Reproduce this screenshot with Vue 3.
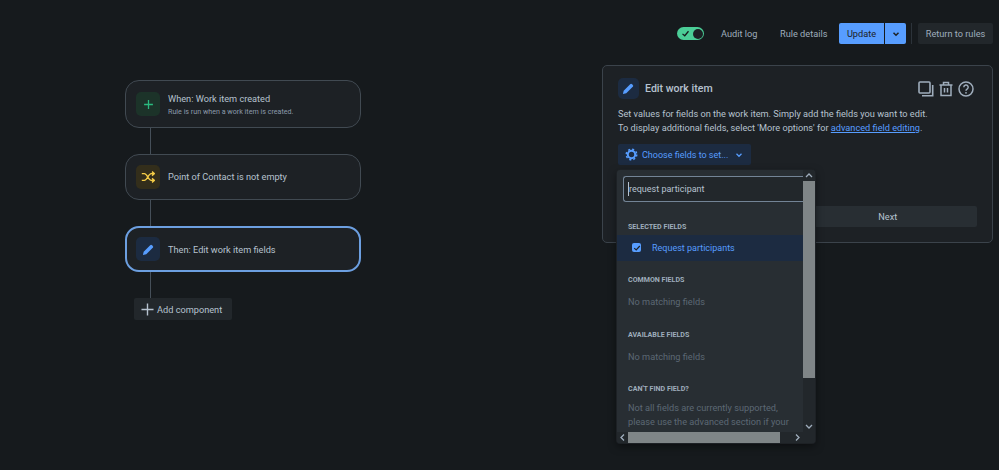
<template>
  <div class="page">
    <header class="topbar">
      <span class="toggle">
        <svg class="toggle-check" viewBox="0 0 12 12" width="9" height="9"><path d="M2 6.500 5 9l5-6" fill="none" stroke="#161a1d" stroke-width="1.700"/></svg>
        <span class="toggle-knob"></span>
      </span>
      <a class="top-link first">Audit log</a>
      <a class="top-link">Rule details</a>
      <button class="update">Update</button>
      <button class="update-more">
        <svg viewBox="0 0 12 12" width="10" height="10"><path d="M3 4.500 6 7.500l3-3" fill="none" stroke="#1d2125" stroke-width="1.800"/></svg>
      </button>
      <span class="top-divider"></span>
      <button class="return">Return to rules</button>
    </header>

    <div class="content">
      <section class="flow">
        <template v-for="step in steps" :key="step.title">
          <div class="step" :class="[step.kind, { active: step.active }]">
            <span class="step-icon" :class="step.kind">
              <svg v-if="step.kind === 'trigger'" viewBox="0 0 12 12" width="11" height="11"><path d="M6 1.200v9.600M1.200 6h9.600" stroke="#2abb7f" stroke-width="1.400" fill="none"/></svg>
              <svg v-else-if="step.kind === 'cond'" viewBox="0 0 14 12" width="14" height="12"><path d="M.8 2.600h2.600c2.800 0 4 6.800 6.800 6.800h2.200M.8 9.400h2.600c2.800 0 4-6.800 6.800-6.800h2.200M11 .6l2.400 2-2.400 2M11 7.400l2.400 2-2.400 2" stroke="#f5cd47" stroke-width="1.400" fill="none"/></svg>
              <svg v-else viewBox="0 0 14 14" width="13" height="13"><path d="M1 13l.8-3.600 7-7a1.500 1.500 0 0 1 2.100 0l.7.700a1.500 1.500 0 0 1 0 2.100l-7 7z" fill="#579dff"/></svg>
            </span>
            <div class="step-text">
              <div class="step-title">{{ step.title }}</div>
              <div v-if="step.sub" class="step-sub">{{ step.sub }}</div>
            </div>
          </div>
          <div class="connector"></div>
        </template>
        <button class="add">
          <svg viewBox="0 0 14 14" width="13" height="13"><path d="M7 .5v13M.5 7h13" stroke="#b6c2cf" stroke-width="1.500" fill="none"/></svg>
          <span>Add component</span>
        </button>
      </section>

      <section class="panel">
        <div class="panel-head">
          <span class="step-icon small action">
            <svg viewBox="0 0 14 14" width="13" height="13"><path d="M1 13l.8-3.600 7-7a1.500 1.500 0 0 1 2.100 0l.7.700a1.500 1.500 0 0 1 0 2.100l-7 7z" fill="#579dff"/></svg>
          </span>
          <h2>Edit work item</h2>
          <div class="panel-tools">
            <svg viewBox="0 0 16 16" width="16" height="16"><rect x="1" y="1" width="11" height="11" rx="1" fill="none" stroke="#9fadbc" stroke-width="1.600"/><path d="M14.700 4v10.700H4" fill="none" stroke="#9fadbc" stroke-width="1.600"/></svg>
            <svg viewBox="0 0 16 16" width="16" height="16"><path d="M1.500 4h13M5.500 4V1.500h5V4M3 4v10.500h10V4M6.500 7v4.500M9.500 7v4.500" fill="none" stroke="#9fadbc" stroke-width="1.500"/></svg>
            <svg viewBox="0 0 16 16" width="16" height="16"><circle cx="8" cy="8" r="7" fill="none" stroke="#9fadbc" stroke-width="1.500"/><path d="M5.800 6.200a2.200 2.200 0 1 1 3.300 1.900c-.8.500-1.100.9-1.100 1.700" fill="none" stroke="#9fadbc" stroke-width="1.500"/><circle cx="8" cy="11.800" r=".9" fill="#9fadbc"/></svg>
          </div>
        </div>
        <p class="panel-desc">
          Set values for fields on the work item. Simply add the fields you want to edit.<br>
          To display additional fields, select 'More options' for <a>advanced field editing</a>.
        </p>
        <button class="choose">
          <svg viewBox="0 0 14 14" width="13" height="13"><circle cx="7" cy="7" r="4" fill="none" stroke="#579dff" stroke-width="2.200"/><circle cx="7" cy="7" r="5.700" fill="none" stroke="#579dff" stroke-width="1.500" stroke-dasharray="2.240 2.240"/></svg>
          <span>Choose fields to set...</span>
          <svg class="choose-chev" viewBox="0 0 12 12" width="10" height="10"><path d="M3 4.500 6 7.500l3-3" fill="none" stroke="#579dff" stroke-width="1.500"/></svg>
        </button>
        <div class="panel-actions">
          <button class="plain">Back</button>
          <button class="plain">Next</button>
        </div>

        <div class="dropdown">
          <div class="dd-body">
            <div class="dd-input"><span class="caret"></span>request participant</div>
            <div class="dd-label first">SELECTED FIELDS</div>
            <div class="dd-selected">
              <span class="check">
                <svg viewBox="0 0 10 10" width="8" height="8"><path d="M1.500 5.200 4 7.500l4.500-5" fill="none" stroke="#1d2125" stroke-width="1.500"/></svg>
              </span>
              Request participants
            </div>
            <div class="dd-label after-row">COMMON FIELDS</div>
            <div class="dd-empty">No matching fields</div>
            <div class="dd-label">AVAILABLE FIELDS</div>
            <div class="dd-empty">No matching fields</div>
            <div class="dd-label">CAN'T FIND FIELD?</div>
            <div class="dd-empty note">Not all fields are currently supported, please use the advanced section if your field does not appear in the list.</div>
          </div>
          <div class="vbar">
            <svg viewBox="0 0 12 11" width="12" height="11"><path d="M3 7l3-3 3 3" fill="none" stroke="#9fadbc" stroke-width="1.300"/></svg>
            <div class="vtrack"><span class="vthumb"></span></div>
            <svg viewBox="0 0 12 11" width="12" height="11"><path d="M3 4l3 3 3-3" fill="none" stroke="#9fadbc" stroke-width="1.300"/></svg>
          </div>
          <div class="hbar">
            <svg viewBox="0 0 11 11" width="11" height="11"><path d="M7 2.500 4 5.500l3 3" fill="none" stroke="#9fadbc" stroke-width="1.300"/></svg>
            <div class="htrack"><span class="hthumb"></span></div>
            <svg viewBox="0 0 11 11" width="11" height="11"><path d="M4 2.500l3 3-3 3" fill="none" stroke="#9fadbc" stroke-width="1.300"/></svg>
          </div>
          <div class="corner"></div>
        </div>
      </section>
    </div>
  </div>
</template>

<script setup>
const steps = [
  { kind: 'trigger', title: 'When: Work item created', sub: 'Rule is run when a work item is created.' },
  { kind: 'cond', title: 'Point of Contact is not empty' },
  { kind: 'action', title: 'Then: Edit work item fields', active: true }
]
</script>

<style>
html, body {
  margin: 0;
  background: #161a1d;
}
</style>

<style scoped>
.page {
  width: 999px;
  height: 470px;
  overflow: hidden;
  background: #161a1d;
  color: #b6c2cf;
  font-family: Roboto, "Liberation Sans", sans-serif;
  font-size: 9.200px;
  box-sizing: border-box;
}

button {
  font-family: inherit;
  border: 0;
  cursor: pointer;
  white-space: nowrap;
}

/* Top bar */
.topbar {
  display: flex;
  align-items: center;
  justify-content: flex-end;
  height: 21px;
  padding: 23px 6px 0 0;
}

.toggle {
  position: relative;
  width: 27px;
  height: 13px;
  border-radius: 7px;
  background: #4bce97;
  display: flex;
  align-items: center;
}

.toggle-check {
  margin-left: 4px;
}

.toggle-knob {
  position: absolute;
  right: 1.500px;
  top: 1.500px;
  width: 10px;
  height: 10px;
  border-radius: 50%;
  background: #1d2125;
}

.top-link {
  color: #9fadbc;
  width: 59px;
}

.top-link.first {
  margin-left: 17px;
}

.update {
  width: 45px;
  height: 21px;
  background: #579dff;
  color: #1d2125;
  font-size: 9.200px;
  padding: 0;
  border-radius: 2px 0 0 2px;
}

.update-more {
  width: 21px;
  height: 21px;
  margin-left: 1px;
  padding: 0;
  background: #579dff;
  border-radius: 0 2px 2px 0;
  display: flex;
  align-items: center;
  justify-content: center;
}

.top-divider {
  width: 1px;
  height: 21px;
  margin: 0 6px 0 5px;
  background: #2c333a;
}

.return {
  width: 75px;
  height: 21px;
  padding: 0;
  background: #22272b;
  color: #9fadbc;
  font-size: 9.200px;
  border-radius: 2px;
}

.content {
  display: flex;
  margin-top: 21px;
}

/* Flow */
.flow {
  width: 236px;
  margin-left: 125px;
  padding-top: 15px;
}

.step {
  box-sizing: border-box;
  height: 46px;
  border: 1px solid #414a52;
  border-radius: 14px;
  background: #1d2125;
  display: flex;
  align-items: center;
  padding-left: 10px;
}

.step.trigger {
  height: 48px;
}

.step.active {
  border: 2px solid #6c9fe0;
  padding-left: 9px;
}

.step-icon {
  width: 24px;
  height: 24px;
  border-radius: 5px;
  display: flex;
  align-items: center;
  justify-content: center;
  flex: none;
}

.step-icon.trigger {
  background: #1c3329;
}

.step-icon.cond {
  background: #332e1b;
}

.step-icon.action {
  background: #1c2b41;
}

.step-icon.small {
  width: 21px;
  height: 21px;
}

.step-text {
  margin-left: 8px;
}

.step.trigger .step-text {
  padding-top: 1px;
}

.step.active .step-text {
  padding-top: 1px;
}

.step-title {
  font-size: 9.200px;
  line-height: 14px;
  color: #b6c2cf;
}

.step-sub {
  font-size: 7.150px;
  line-height: 11px;
  color: #8c9bab;
}

.connector {
  width: 1.500px;
  height: 26px;
  margin-left: 24.500px;
  background: #454f59;
}

.add {
  display: flex;
  align-items: center;
  gap: 3px;
  width: 98px;
  height: 22px;
  margin-left: 9px;
  padding: 0 0 0 7px;
  background: #22272b;
  color: #b6c2cf;
  font-size: 9.200px;
  border-radius: 2px;
}

/* Panel */
.panel {
  position: relative;
  box-sizing: border-box;
  width: 391px;
  height: 178px;
  margin-left: 241px;
  padding: 12px 15px 0;
  background: #1d2125;
  border: 1px solid #3b434b;
  border-radius: 5px;
}

.panel-head {
  display: flex;
  align-items: center;
  height: 21px;
}

.panel-head h2 {
  margin: 0 0 0 6px;
  font-size: 10.600px;
  font-weight: 500;
  color: #b6c2cf;
}

.panel-tools {
  display: flex;
  gap: 4px;
  margin-left: auto;
  margin-right: 3px;
}

.panel-desc {
  margin: 8px 0 0;
  font-size: 9.200px;
  line-height: 14px;
  color: #b6c2cf;
}

.panel-desc a {
  color: #579dff;
  text-decoration: underline;
}

.choose {
  display: flex;
  align-items: center;
  width: 133px;
  height: 21px;
  margin-top: 9px;
  padding: 0 0 0 7px;
  background: #1c2b41;
  color: #579dff;
  font-size: 9px;
  border-radius: 2px;
}

.choose span {
  margin-left: 4px;
}

.choose-chev {
  margin-left: 6px;
}

.panel-actions {
  display: flex;
  gap: 2px;
  margin-top: 41px;
}

.plain {
  flex: 1;
  height: 21px;
  padding: 0;
  background: #282e33;
  color: #b6c2cf;
  font-size: 9.200px;
  border-radius: 2px;
}

/* Dropdown */
.dropdown {
  position: absolute;
  left: 14px;
  top: 104px;
  width: 198px;
  height: 273px;
  display: grid;
  grid-template-columns: 186px 12px;
  grid-template-rows: 262px 11px;
  background: #282e33;
  border-radius: 3px;
  box-shadow: 0 0 0 1px #1d2125, 0 3px 8px rgba(0, 0, 0, 0.5);
  overflow: hidden;
}

.dd-body {
  overflow: hidden;
  padding-top: 6px;
  box-sizing: border-box;
}

.dd-input {
  box-sizing: border-box;
  position: relative;
  width: 186px;
  height: 26px;
  margin-left: 6px;
  padding-left: 5px;
  line-height: 24px;
  font-size: 9px;
  color: #b6c2cf;
  background: #22272b;
  border: 1px solid #738496;
  border-right: 0;
  border-radius: 3px 0 0 3px;
}

.caret {
  position: absolute;
  left: 4px;
  top: 5px;
  width: 1px;
  height: 14px;
  background: #b6c2cf;
}

.dd-label {
  margin: 19.500px 0 0 11px;
  font-size: 7.100px;
  line-height: 11px;
  font-weight: 700;
  color: #9fadbc;
}

.dd-label.first {
  margin-top: 18.500px;
}

.dd-label.after-row {
  margin-top: 13.500px;
}

.dd-selected {
  display: flex;
  align-items: center;
  height: 26px;
  margin-top: 3px;
  padding-left: 15px;
  background: #1c2b41;
  color: #579dff;
  font-size: 9px;
}

.check {
  width: 9px;
  height: 9px;
  margin-right: 11px;
  border-radius: 2px;
  background: #579dff;
  display: flex;
  align-items: center;
  justify-content: center;
}

.dd-empty {
  margin: 10px 0 0 11px;
  font-size: 9.200px;
  line-height: 14px;
  color: #5c6874;
}

.dd-empty.note {
  width: 165px;
  margin-top: 6.500px;
}

.vbar {
  background: #22272b;
  display: flex;
  flex-direction: column;
}

.vtrack {
  flex: 1;
}

.vthumb {
  display: block;
  height: 197px;
  background: #7f8587;
}

.hbar {
  background: #22272b;
  display: flex;
}

.htrack {
  flex: 1;
}

.hthumb {
  display: block;
  width: 152px;
  height: 11px;
  background: #7f8587;
}

.corner {
  background: #22272b;
}
</style>
